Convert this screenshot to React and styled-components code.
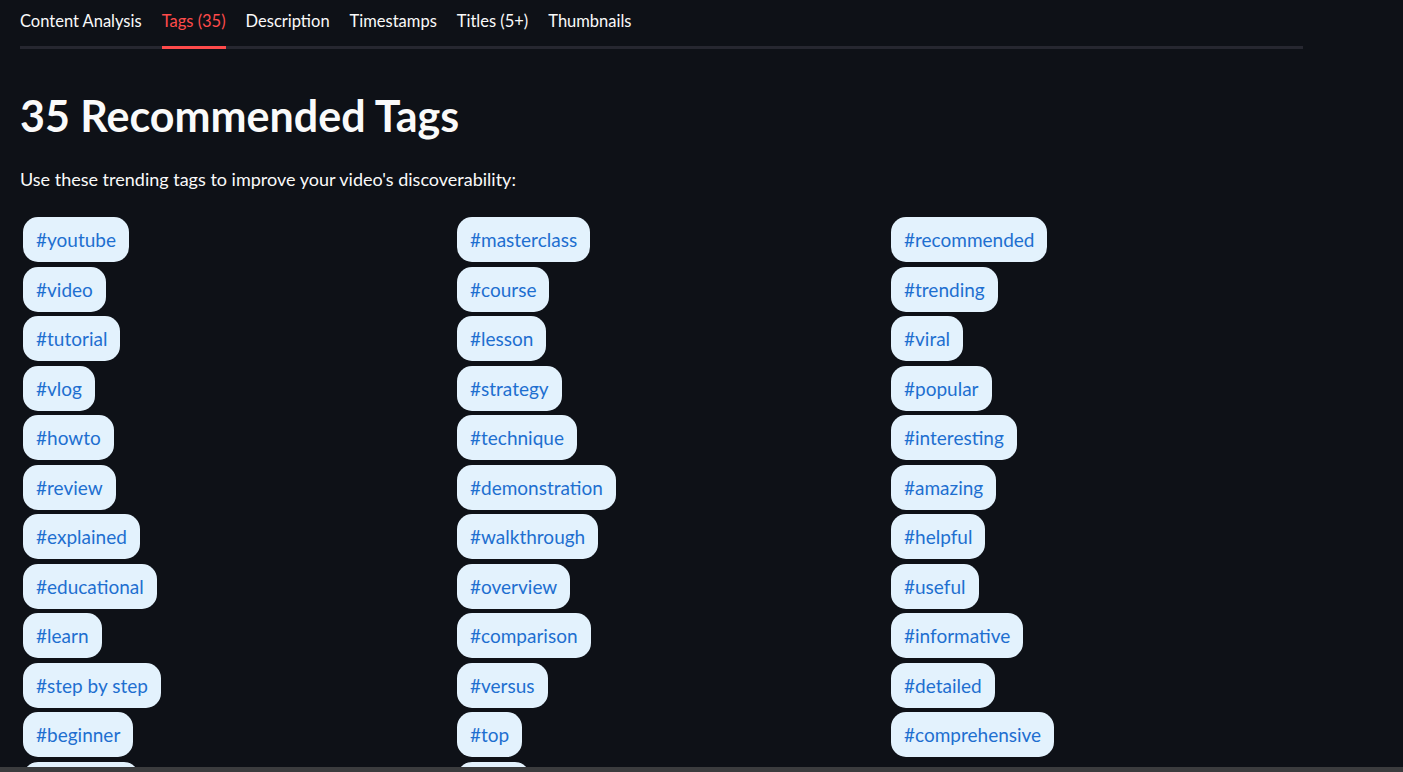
import React from "react";
import styled, { createGlobalStyle } from "styled-components";

const Global = createGlobalStyle`
  html, body { margin: 0; padding: 0; background: #0e1117; }
  body { font-family: Lato, "Noto Sans", sans-serif; color: #fafafa; }
`;

const Page = styled.div`
  height: 100vh;
  display: flex;
  flex-direction: column;
  background: #0e1117;
  overflow: hidden;
`;

const Main = styled.main`
  flex: 1;
  min-height: 0;
  overflow: hidden;
  padding: 0 100px 0 20px;
`;

const TabList = styled.div`
  display: flex;
  gap: 20px;
  border-bottom: 3px solid #262730;
  height: 46px;
`;

const Tab = styled.button`
  background: none;
  border: none;
  padding: 0;
  margin-bottom: -3px;
  font-family: inherit;
  font-size: 16.5px;
  color: ${(p) => (p.$active ? "#ff4b4b" : "#fafafa")};
  border-bottom: 3px solid ${(p) => (p.$active ? "#ff4b4b" : "transparent")};
  display: flex;
  align-items: flex-start;
  padding-top: 11px;
  cursor: pointer;
  white-space: nowrap;
`;

const Title = styled.h2`
  margin: 41px 0 0;
  font-size: 43px;
  font-weight: 700;
  line-height: 52px;
  color: #fafafa;
`;

const Lead = styled.p`
  margin: 23px 0 24px;
  font-size: 18px;
  line-height: 28px;
  color: #fafafa;
`;

const Grid = styled.div`
  display: grid;
  grid-template-columns: repeat(3, 1fr);
  column-gap: 19px;
`;

const Column = styled.div`
  display: flex;
  flex-direction: column;
  align-items: flex-start;
  gap: 4.5px;
`;

const TagPill = styled.span`
  margin-left: 3px;
  height: 45px;
  box-sizing: border-box;
  display: inline-flex;
  align-items: center;
  padding: 0 13px;
  border-radius: 15px;
  background: #e3f2fd;
  color: #1e6fd0;
  font-size: 19px;
  white-space: nowrap;
`;

const BottomBar = styled.div`
  height: 5px;
  flex: none;
  background: #3b3c3e;
`;

const tabs = ["Content Analysis", "Tags (35)", "Description", "Timestamps", "Titles (5+)", "Thumbnails"];

const columns = [
  ["youtube", "video", "tutorial", "vlog", "howto", "review", "explained", "educational", "learn", "step by step", "beginner", "advanced"],
  ["masterclass", "course", "lesson", "strategy", "technique", "demonstration", "walkthrough", "overview", "comparison", "versus", "top", "best"],
  ["recommended", "trending", "viral", "popular", "interesting", "amazing", "helpful", "useful", "informative", "detailed", "comprehensive"],
];

export default function App() {
  return (
    <Page>
      <Global />
      <Main>
        <TabList>
          {tabs.map((t, i) => (
            <Tab key={t} $active={i === 1}>{t}</Tab>
          ))}
        </TabList>
        <Title>35 Recommended Tags</Title>
        <Lead>Use these trending tags to improve your video's discoverability:</Lead>
        <Grid>
          {columns.map((col, i) => (
            <Column key={i}>
              {col.map((t) => (
                <TagPill key={t}>#{t}</TagPill>
              ))}
            </Column>
          ))}
        </Grid>
      </Main>
      <BottomBar />
    </Page>
  );
}
